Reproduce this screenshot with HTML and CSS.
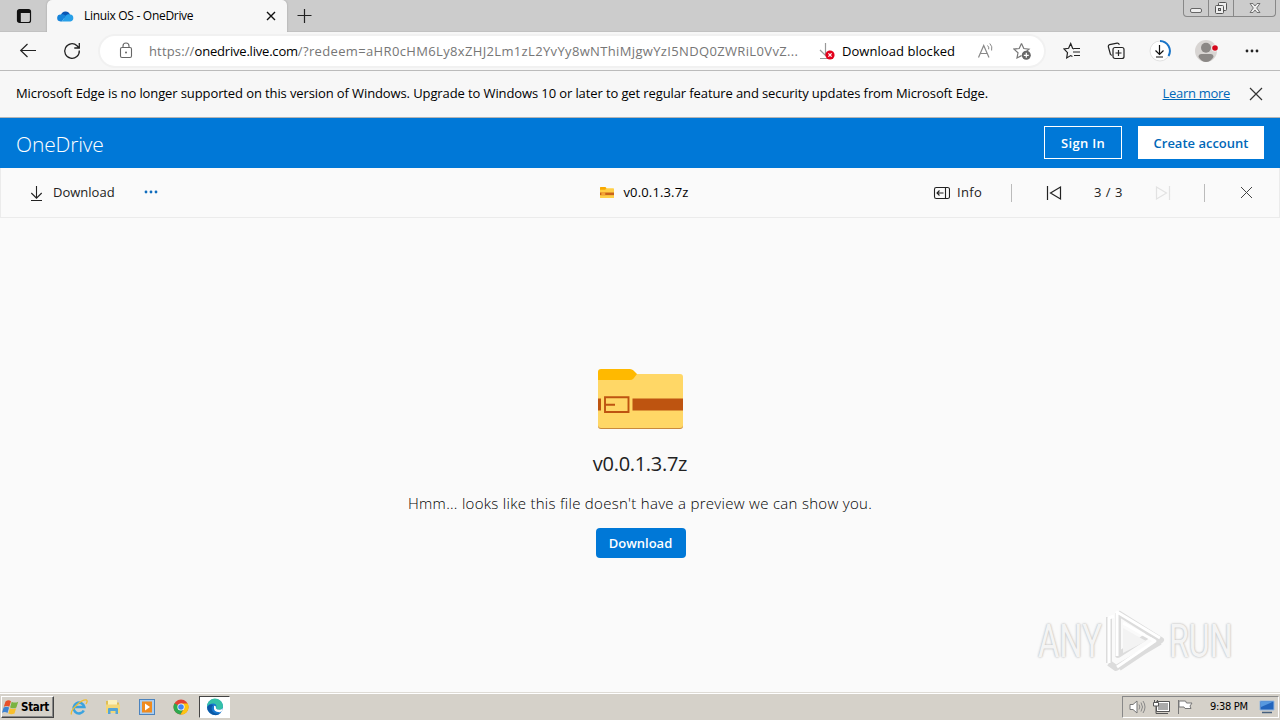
FILE: index.html
```html
<!DOCTYPE html>
<html lang="en">
<head>
  <meta charset="UTF-8">
  <title>Linuix OS - OneDrive</title>
  <link rel="stylesheet" href="styles.css">
</head>
<body>

<!-- tab strip -->
<div class="tabstrip">
  <div class="tab-actions">
    <svg width="16" height="16" viewBox="0 0 16 16"><rect x="1.5" y="1.500" width="13" height="13" rx="2" fill="none" stroke="#111" stroke-width="1.2"/><path d="M2 2h12v3H2zM2 5h2.800v9H2z" fill="#111"/></svg>
  </div>
  <div class="tab">
    <svg width="17" height="12" viewBox="0 0 17 12"><path d="M4 5a4.8 4.8 0 0 1 9-.5L12 8H4z" fill="#0a57b5"/><path d="M3.8 4.5c2-.6 3.5.2 5 1.3L5 11.5H3.5a3.5 3.5 0 0 1 .3-7z" fill="#1684da"/><path d="M8.5 6c1.2-1.5 3-2 4.8-1.4a3.5 3.5 0 0 1 .2 6.9H5z" fill="#28a0e8"/></svg>
    <span class="tab-title">Linuix OS - OneDrive</span>
    <svg class="tab-close" width="10" height="10" viewBox="0 0 10 10"><path d="M1 1l8 8M9 1l-8 8" stroke="#111" stroke-width="1.4"/></svg>
  </div>
  <svg class="new-tab" width="16" height="16" viewBox="0 0 16 16"><path d="M7.500 1v14M.5 7.500h14" stroke="#222" stroke-width="1.2"/></svg>
  <div class="win-buttons">
    <span class="win-min"><svg width="14" height="8" viewBox="0 0 14 8"><rect x="1.5" y="2.5" width="11" height="4" rx="1.5" fill="#eee" stroke="#666"/></svg></span>
    <span class="win-max"><svg width="14" height="14" viewBox="0 0 14 14"><rect x="4.5" y="1.500" width="8" height="8" rx="1" fill="#eee" stroke="#555"/><rect x="1.500" y="4.500" width="8" height="8" rx="1" fill="#eee" stroke="#555"/><rect x="4.500" y="7.500" width="2" height="2" fill="#ccc" stroke="#555"/></svg></span>
    <span class="win-close"><svg width="12" height="12" viewBox="0 0 12 12"><path d="M1 1.500h3L6 4l2-2.500h3L7.700 6 11 10.500H8L6 8l-2 2.500H1L4.300 6z" fill="#eee" stroke="#666" stroke-width=".9"/></svg></span>
  </div>
</div>

<!-- browser toolbar -->
<div class="toolbar">
  <svg class="back" width="18" height="16" viewBox="0 0 18 16"><path d="M17 7.500H2M8.500 1L1.700 7.500 8.500 14" fill="none" stroke="#222" stroke-width="1.200"/></svg>
  <svg class="reload" width="18" height="18" viewBox="0 0 18 18"><path d="M16.300 8.500A7.300 7.300 0 1 1 14 3.700l2 2M16.300 1v5h-5" fill="none" stroke="#222" stroke-width="1.300"/></svg>
  <div class="address">
    <svg class="lock" width="14" height="18" viewBox="0 0 14 18"><rect x="1.500" y="5.500" width="11" height="10" rx="1.500" fill="none" stroke="#666" stroke-width="1.100"/><path d="M4 5.500V4a3 3 0 0 1 6 0v1.500" fill="none" stroke="#666" stroke-width="1.100"/><circle cx="7" cy="10.500" r="1" fill="#666"/></svg>
    <div class="url"><span class="url-scheme">https://</span><span class="url-host">onedrive.live.com</span><span class="url-path">/?redeem=aHR0cHM6Ly8xZHJ2Lm1zL2YvYy8wNThiMjgwYzI5NDQ0ZWRiL0VvZ...</span></div>
    <svg class="blocked-icon" width="18" height="18" viewBox="0 0 18 18"><path d="M7.500 1v12M2 8l5.500 5.500L12 9M2 16.500h8" fill="none" stroke="#999" stroke-width="1.200"/><circle cx="12" cy="13" r="4.600" fill="#e3001b"/><path d="M10.400 11.400l3.200 3.200m0-3.200l-3.200 3.200" stroke="#fff" stroke-width="1.200"/></svg>
    <span class="blocked">Download blocked</span>
    <svg class="read" width="18" height="18" viewBox="0 0 18 18"><path d="M1.500 15.500L6.700 3.500 12 15.500M3.300 11.500h6.800" fill="none" stroke="#888" stroke-width="1.200"/><path d="M10.500 3.500q1.700 1.500 1.200 3.800M12.800 1.500q3 3 1.800 7" fill="none" stroke="#888"/></svg>
    <svg class="fav-add" width="19" height="19" viewBox="0 0 19 19"><path d="M8.500 1.500l2.300 5 5.200.6-3.900 3.500M8.500 1.500l-2.300 5-5.200.6 4 3.700-1 5.200 4.500-2.400" fill="none" stroke="#777" stroke-width="1.200"/><circle cx="13.300" cy="13.300" r="4.500" fill="#666"/><path d="M13.300 10.800v5M10.800 13.300h5" stroke="#fff" stroke-width="1.200"/></svg>
  </div>
  <svg class="favorites" width="18" height="18" viewBox="0 0 18 18"><path d="M11 7L9.600 6.300 7.700 1.500 5.600 6.300 1 7l3.500 3.700-.8 5.200 4-2.300 1.700 1M11 6.500h6M10 10h7M11 13.500h6" fill="none" stroke="#222" stroke-width="1.200"/></svg>
  <svg class="collections" width="18" height="18" viewBox="0 0 18 18"><rect x="6" y="5.500" width="11" height="11" rx="2" fill="none" stroke="#222" stroke-width="1.200"/><path d="M11.500 8v6M8.500 11h6M3.500 12.500L1.400 5A1.800 1.800 0 0 1 2.600 2.700l7.500-1.600q1.600-.2 2.300 1.600M3.500 12.500Q4 13.200 5 13" fill="none" stroke="#222" stroke-width="1.200"/></svg>
  <svg class="downloads" width="24" height="24" viewBox="0 0 24 24"><circle cx="12" cy="12" r="10" fill="#fff" stroke="#e2e2e2"/><path d="M12 2a10 10 0 0 1 8.500 15" fill="none" stroke="#1874c8" stroke-width="2"/><path d="M11.500 6v9.500M7.500 11.500l4 4 4-4M8 18h7" fill="none" stroke="#111" stroke-width="1.200"/></svg>
  <svg class="profile" width="24" height="24" viewBox="0 0 24 24"><circle cx="12" cy="12" r="11" fill="#d8d5d3"/><circle cx="12" cy="8.700" r="5" fill="#8b8886"/><path d="M4.500 18q0-3 3-3h9q3 0 3 3-3 5-7.500 5t-7.500-5z" fill="#8b8886"/><circle cx="21" cy="9" r="3.500" fill="#f7f7f7"/><circle cx="21" cy="9" r="2.800" fill="#d5081c"/></svg>
  <svg class="menu" width="14" height="4" viewBox="0 0 14 4"><g fill="#222"><circle cx="2" cy="2" r="1.400"/><circle cx="7" cy="2" r="1.400"/><circle cx="12" cy="2" r="1.400"/></g></svg>
</div>

<!-- support notice -->
<div class="notice">
  <span class="notice-text">Microsoft Edge is no longer supported on this version of Windows. Upgrade to Windows 10 or later to get regular feature and security updates from Microsoft Edge.</span>
  <a class="notice-link" href="#">Learn more</a>
  <svg width="14" height="14" viewBox="0 0 14 14"><path d="M1 1l12 12M13 1L1 13" stroke="#333" stroke-width="1.200"/></svg>
</div>

<!-- OneDrive page -->
<header class="header">
  <span class="brand">OneDrive</span>
  <a class="btn-signin" href="#">Sign In</a>
  <a class="btn-create" href="#">Create account</a>
</header>

<div class="commands">
  <div class="cmd-left">
    <svg width="14" height="18" viewBox="0 0 14 18"><path d="M7.500 2v12M2.300 9l5.200 5.200L12.700 9M2 16.500h11" fill="none" stroke="#222" stroke-width="1.100"/></svg>
    <span class="cmd-download">Download</span>
    <svg class="cmd-more" width="16" height="4" viewBox="0 0 16 4"><g fill="#0f6cbd"><circle cx="3" cy="2" r="1.400"/><circle cx="8" cy="2" r="1.400"/><circle cx="13" cy="2" r="1.400"/></g></svg>
  </div>
  <div class="cmd-file">
    <svg width="14" height="11" viewBox="0 0 85 62" preserveAspectRatio="none"><path d="M0 6q0-6 6-6h27l8 7h40q4 0 4 5v50H0z" fill="#ffcf48"/><path d="M0 16V5q0-5 5-5h27l6 7-6 9z" fill="#f9a900"/><path d="M0 31h85v15H0z" fill="#c8641a"/><path d="M8 29h24v18H8z" fill="#f3a434"/></svg>
    <span class="cmd-name">v0.0.1.3.7z</span>
  </div>
  <div class="cmd-right">
    <svg class="info-icon" width="17" height="14" viewBox="0 0 17 14"><rect x="1.500" y="1.500" width="15" height="11" rx="1.800" fill="none" stroke="#222" stroke-width="1.100"/><path d="M12.500 1.500v11M10.500 7H4M6.500 4.500L4 7l2.500 2.500" fill="none" stroke="#222" stroke-width="1.100"/></svg>
    <span class="info">Info</span>
    <i class="sep"></i>
    <svg class="prev" width="16" height="16" viewBox="0 0 16 16"><path d="M1.500 1v14M14.500 2v12L4.500 8z" fill="none" stroke="#222" stroke-width="1.200"/></svg>
    <span class="count">3 / 3</span>
    <svg class="next" width="16" height="16" viewBox="0 0 16 16"><path d="M14.500 1v14M1.500 2v12l10-6z" fill="none" stroke="#e2e2e2" stroke-width="1.200"/></svg>
    <i class="sep sep-last"></i>
    <svg class="close" width="13" height="13" viewBox="0 0 13 13"><path d="M1 1l11 11M12 1L1 12" stroke="#444"/></svg>
  </div>
</div>

<main class="preview">
  <svg class="folder" width="86" height="62" viewBox="0 0 86 62">
    <path d="M1 8h82q3 0 3 3v47q0 3-3 3H4q-3 0-3-3z" fill="#c98a3c"/>
    <path d="M1 6h82q3 0 3 3v48q0 3-3 3H4q-3 0-3-3z" fill="#ffd766"/>
    <path d="M1 12V4q0-3 3-3h29q2 0 3.500 1.500L40 6l-3.500 4.500Q35 12 33 12z" fill="#ffb900"/>
    <path d="M1 30.500h3v12H1zM35.500 30.500H86v12H35.500z" fill="#be5410"/>
    <path d="M8 29.300h23.500V44H8zM8 36.700h10M18 36.700" fill="none" stroke="#be5410" stroke-width="1.900"/>
  </svg>
  <h1 class="file-name">v0.0.1.3.7z</h1>
  <p class="message">Hmm... looks like this file doesn't have a preview we can show you.</p>
  <button class="btn-download">Download</button>

  <div class="watermark">
    <span class="mark-any">ANY</span>
    <svg width="60" height="66" viewBox="0 0 60 66"><path d="M4 9v46M13 5l43 27-42 28M13 5v42l34-22M4 55l7 5 44-26" fill="none" stroke="#dcdcdc" stroke-width="6" stroke-linejoin="round"/><path d="M4 55V10l5-2M12 48V4l43 26M18 15l32 18L12 59" fill="none" stroke="#fff" stroke-width="3" stroke-linejoin="round"/><path d="M18 20v25l23-12z" fill="#f3f3f3"/></svg>
    <span class="mark-run">RUN</span>
  </div>
</main>

<!-- Windows taskbar -->
<div class="taskbar">
  <div class="start">
    <svg width="17" height="16" viewBox="0 0 17 16"><path d="M3.500 2.500q3-2.200 5.500-.3L7.300 7.800q-2.500-1.800-5.500 0z" fill="#e8502a"/><path d="M9.700 2.700q3 1.800 6.500 0L14.400 8.500q-3 1.700-6.300 0z" fill="#7ab342"/><path d="M1.600 8.500q3-1.700 5.500 0L5.500 14Q3 12 0 13.800z" fill="#3d83d2"/><path d="M7.900 9.300q3 1.500 6.200 0l-1.600 5.200q-3 1.500-6.200 0z" fill="#f8bf2d"/></svg>
    <span>Start</span>
  </div>
  <svg class="app-ie" width="18" height="18" viewBox="0 0 18 18"><path d="M13.800 12.500A5.400 5.400 0 1 1 14.300 9H5" fill="none" stroke="#3ba3df" stroke-width="2.600"/><path d="M1.500 16.500C-.5 12 12 1 16.500 2q1.500 1-.5 4" fill="none" stroke="#efbd31" stroke-width="1.300"/></svg>
  <svg class="app-explorer" width="16" height="16" viewBox="0 0 16 16"><path d="M1 2h5l1 1.500h7V14H1z" fill="#dfbe55"/><path d="M3 1h9v5H3z" fill="#fbf1bd"/><path d="M1 5.500h14V14H1z" fill="#f3d778"/><path d="M3 15v-5q0-1 1-1h8q1 0 1 1v5h-2.500v-3h-5v3z" fill="#55a5d6"/></svg>
  <svg class="app-media" width="16" height="16" viewBox="0 0 16 16"><rect x=".5" y=".5" width="15" height="15" fill="#a9cdf0" stroke="#4c83bd"/><rect x="3" y="2.500" width="10" height="11" fill="#f08b1e"/><path d="M6 4.500v7L11 8z" fill="#fff"/></svg>
  <svg class="app-chrome" width="16" height="16" viewBox="0 0 16 16"><circle cx="8" cy="8" r="7.500" fill="#e34133"/><path d="M8 8L1.500 4.200A7.500 7.500 0 0 0 7.500 15.500L11 9z" fill="#2da94f"/><path d="M8 4.500h6.700a7.500 7.500 0 0 1-7.200 11L11.500 9z" fill="#fdc511"/><circle cx="8" cy="8" r="3.600" fill="#fff"/><circle cx="8" cy="8" r="2.800" fill="#4285f4"/></svg>
  <div class="app-edge">
    <svg width="18" height="18" viewBox="0 0 18 18"><circle cx="9" cy="9" r="8" fill="#1777cf"/><path d="M1 9a8 8 0 0 1 16-1q0 3.500-3.500 3.700-3 0-3.500-1.200Q11.500 6 7.500 5.600 3 5.500 1 9z" fill="#35c1a8"/><path d="M7.200 7Q4 10 7 14q3 3.200 8 .8-3 3.500-8 2Q1 14 1.200 9 4 5.500 7.200 7z" fill="#0c59a4"/><path d="M8 8q2.300-.8 2 2.500 1 1.500 4 1.300 1.600-.2 3-1.600-.3 3-3 4Q7 14.500 8 8z" fill="#fff"/></svg>
  </div>
  <div class="tray">
    <svg class="tray-sound" width="17" height="16" viewBox="0 0 17 16"><path d="M1 5.500h3L8 2v12l-4-3.500H1z" fill="#fff" stroke="#777"/><path d="M10 5.500q1.700 2.500 0 5M12 3.500q3 4.500 0 9M14 2q4 6 0 12" fill="none" stroke="#888"/></svg>
    <svg class="tray-net" width="17" height="16" viewBox="0 0 17 16"><rect x="4.500" y="3.500" width="11" height="8" fill="#aaa" stroke="#fff"/><path d="M3.500 2.500h13v10h-13z" fill="none" stroke="#555"/><path d="M7 14.500h8" stroke="#555"/><path d="M.5 3.500h5v3.500h-5z" fill="#fff" stroke="#555"/><path d="M1.500 1v2.500M4.500 1v2.500M3 7v7.500h4" fill="none" stroke="#555"/></svg>
    <svg class="tray-flag" width="16" height="16" viewBox="0 0 16 16"><path d="M1.500 1v14M2 2h6.500l1 2H15l-2 3 1 2.500H8L7 8H2z" fill="#fff" stroke="#777"/></svg>
    <span class="clock">9:38 PM</span>
    <svg class="tray-desktop" width="16" height="14" viewBox="0 0 16 14"><path d="M1 1h14v9H1z" fill="#2265bd" stroke="#95b8df"/><path d="M1.500 1.500h13L2 7z" fill="#5799df"/><path d="M3 12.500h10" stroke="#46607e" stroke-width="1.500"/></svg>
  </div>
</div>

</body>
</html>
```

FILE: styles.css
```css
* {
  box-sizing: border-box;
}

body {
  margin: 0;
  width: 1280px;
  height: 720px;
  overflow: hidden;
  display: flex;
  flex-direction: column;
  font-family: "Open Sans", "Noto Sans", sans-serif;
  font-size: 13px;
  color: #000;
  background: #fafafa;
  white-space: nowrap;
}

svg {
  display: block;
  flex: none;
}

a {
  text-decoration: none;
}

/* tab strip */
.tabstrip {
  height: 32px;
  flex: none;
  display: flex;
  background: #ccc;
  border-bottom: 1px solid #c2c2c2;
}

.tab-actions {
  width: 47px;
  height: 32px;
  padding: 8px 0 0 16px;
}

.tab {
  width: 240px;
  height: 32px;
  display: flex;
  align-items: center;
  padding: 0 10px;
  background: #f7f7f7;
  border-radius: 5px 5px 0 0;
  box-shadow: 0 0 2px #999;
  clip-path: inset(0 -3px 0 -3px);
}

.tab-title {
  margin-left: 10px;
  width: 182px;
  padding-bottom: 1px;
  font-size: 12px;
  letter-spacing: -0.3px;
}

.new-tab {
  margin: 8px 0 0 10px;
}

.win-buttons {
  display: flex;
  height: 17px;
  margin: 0 4px 0 auto;
  border: 1px solid #888;
  border-top: 0;
  border-radius: 0 0 4px 4px;
}

.win-buttons span {
  width: 25px;
  display: flex;
  align-items: center;
  justify-content: center;
  border-right: 1px solid #888;
}

.win-buttons .win-min {
  padding-top: 3px;
}

.win-buttons .win-close {
  width: 41px;
  border-right: 0;
}

/* browser toolbar */
.toolbar {
  height: 39px;
  flex: none;
  display: flex;
  align-items: center;
  background: #f7f7f7;
  border-bottom: 1px solid #bbb;
}

.back {
  margin-left: 19px;
}

.reload {
  margin-left: 26px;
}

.address {
  width: 944px;
  height: 30px;
  margin-left: 19px;
  display: flex;
  align-items: center;
  border-radius: 15px;
  background: #fff;
  box-shadow: 0 0 0 2px #f1f1f1;
}

.lock {
  margin-left: 19px;
}

.url {
  width: 650px;
  margin-left: 16px;
  color: #767676;
}

.url-scheme {
  letter-spacing: 0.15px;
}

.url-host {
  color: #000;
  letter-spacing: -0.2px;
}

.url-path {
  letter-spacing: 0.35px;
}

.blocked-icon {
  margin-left: 19px;
}

.blocked {
  margin-left: 6px;
  width: 114px;
  letter-spacing: 0.05px;
}

.read {
  margin-left: 21px;
}

.fav-add {
  margin-left: 18px;
}

.favorites {
  margin-left: 19px;
}

.collections {
  margin-left: 26px;
}

.downloads {
  margin-left: 23px;
}

.profile {
  margin-left: 22px;
}

.menu {
  margin-left: 27px;
}

/* support notice */
.notice {
  height: 47px;
  flex: none;
  display: flex;
  align-items: center;
  padding: 0 17px 0 16px;
  background: #f7f7f7;
  border-bottom: 1px solid #b5b5b5;
}

.notice-text {
  padding-bottom: 2px;
  letter-spacing: -0.108px;
}

.notice-link {
  margin: 0 19px 0 auto;
  padding-bottom: 2px;
  color: #0067b8;
  letter-spacing: -0.3px;
  text-decoration: underline;
}

/* OneDrive header */
.header {
  height: 50px;
  flex: none;
  display: flex;
  align-items: center;
  padding: 0 16px 2px;
  background: #0078d7;
}

.brand {
  margin-right: auto;
  padding-top: 3px;
  font-size: 21px;
  font-weight: 300;
  letter-spacing: -0.15px;
  color: #fff;
}

.btn-signin,
.btn-create {
  height: 33px;
  line-height: 32px;
  text-align: center;
  font-weight: 600;
  color: #fff;
  border: 1px solid #fff;
}

.btn-signin {
  width: 78px;
  margin-right: 16px;
  letter-spacing: 0.3px;
}

.btn-create {
  width: 126px;
  background: #fff;
  color: #0067b8;
}

/* command bar */
.commands {
  height: 50px;
  flex: none;
  display: grid;
  grid-template-columns: 1fr auto 1fr;
  align-items: center;
  border: 1px solid #ebebeb;
  border-top: 0;
  background: #fafafa;
  color: #222;
}

.cmd-left,
.cmd-file,
.cmd-right {
  display: flex;
  align-items: center;
}

.commands span {
  padding-bottom: 2px;
}

.cmd-left {
  padding-left: 28px;
}

.cmd-download {
  margin-left: 10px;
  width: 62px;
}

.cmd-more {
  margin: -1px 0 0 28px;
}

.cmd-file {
  gap: 9px;
  padding-left: 9px;
  color: #000;
}

.cmd-name {
  letter-spacing: 0.15px;
}

.cmd-right {
  justify-content: flex-end;
  padding-right: 26px;
}

.info {
  margin-left: 7px;
  width: 26px;
  letter-spacing: 0.3px;
}

.sep {
  width: 1px;
  height: 18px;
  margin-left: 28px;
  background: #bbb;
}

.prev {
  margin-left: 34px;
}

.count {
  margin-left: 32px;
  width: 29px;
  letter-spacing: 0.5px;
}

.next {
  margin-left: 32px;
}

.sep-last {
  margin-left: 33px;
}

.close {
  margin-left: 35px;
}

/* file preview */
.preview {
  position: relative;
  flex: 1;
  display: flex;
  flex-direction: column;
  align-items: center;
  padding-top: 150px;
  color: #222;
}

.file-name {
  margin: 20px 0 0;
  font-size: 20px;
  line-height: 28px;
  font-weight: 400;
  letter-spacing: -0.3px;
}

.message {
  margin: 14px 0 0;
  font-size: 15px;
  line-height: 22px;
  font-weight: 300;
  letter-spacing: 0.29px;
  color: #000;
}

.btn-download {
  width: 90px;
  height: 30px;
  margin: 14px 0 0 1px;
  padding: 0;
  border: 0;
  border-radius: 4px;
  background: #0078d7;
  color: #fff;
  font-family: inherit;
  font-size: 13px;
  font-weight: 600;
}

.watermark {
  position: absolute;
  left: 1038px;
  top: 390px;
  display: flex;
  align-items: center;
  color: #f4f4f4;
  font-family: Roboto, sans-serif;
  font-size: 46px;
  line-height: 66px;
  text-shadow: 0 0 2px #bbb, 0 0 3px #ccc;
}

.watermark span {
  width: 64px;
  transform-origin: left;
}

.watermark svg {
  margin: 0 4px 0 3px;
}

.mark-any {
  transform: scaleX(0.71);
}

.mark-run {
  transform: scaleX(0.7);
}

/* Windows taskbar */
.taskbar {
  height: 28px;
  flex: none;
  display: flex;
  align-items: center;
  background: #d5d1c9;
  border-top: 1px solid #dedbd5;
  box-shadow: inset 0 1px #fff;
}

.start {
  width: 53px;
  height: 22px;
  margin-left: 1px;
  display: flex;
  align-items: center;
  gap: 2px;
  border: 1px solid;
  border-color: #fff #444 #444 #fff;
  box-shadow: inset -1px -1px #888;
  font-family: "DejaVu Sans Condensed", "DejaVu Sans", sans-serif;
  font-size: 11.5px;
  font-weight: bold;
  letter-spacing: -0.3px;
}

.app-ie {
  margin-left: 16px;
}

.app-explorer {
  margin-left: 17px;
}

.app-media {
  margin-left: 18px;
}

.app-chrome {
  margin-left: 18px;
}

.app-edge {
  width: 31px;
  height: 22px;
  margin-left: 10px;
  display: flex;
  align-items: center;
  justify-content: center;
  background: #fff;
  border: 1px solid;
  border-color: #444 #fff #fff #444;
}

.tray {
  width: 157px;
  height: 22px;
  margin: 0 1px 0 auto;
  display: flex;
  align-items: center;
  padding-left: 6px;
  border: 1px solid;
  border-color: #888 #fff #fff #888;
}

.tray-net,
.tray-flag {
  margin-left: 7px;
}

.clock {
  margin-left: 17px;
  width: 41px;
  font-family: "DejaVu Sans Condensed", "DejaVu Sans", sans-serif;
  font-size: 11px;
  letter-spacing: -0.3px;
}

.tray-desktop {
  margin-left: 8px;
}
```
